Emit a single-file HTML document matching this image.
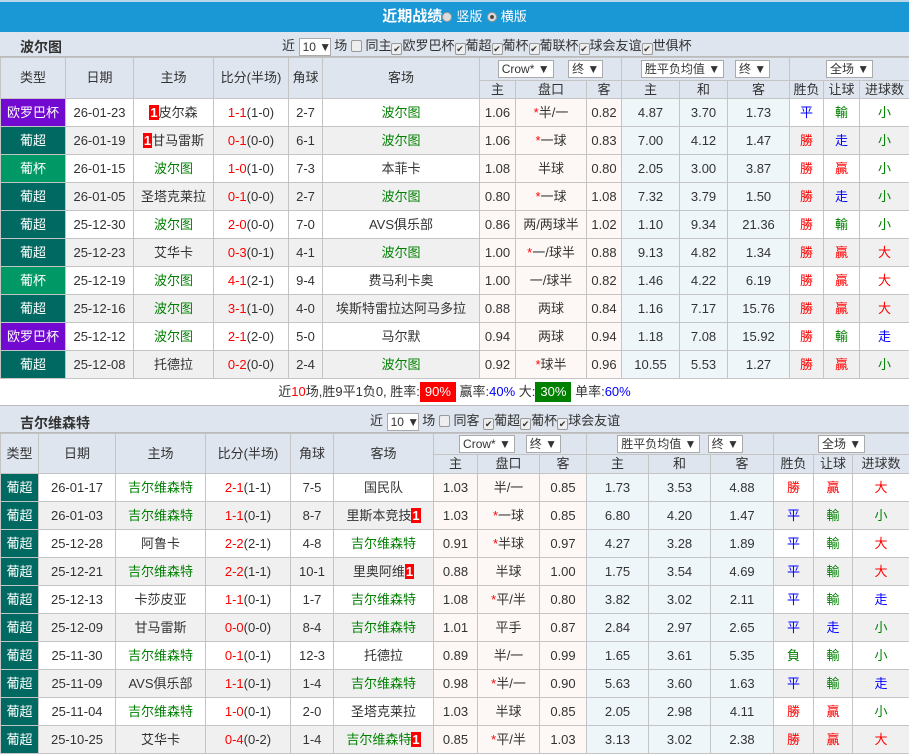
<!DOCTYPE html>
<html><head><meta charset="utf-8"><style>
*{margin:0;padding:0;box-sizing:border-box}
body{width:909px;height:755px;overflow:hidden;background:#fff;font-family:"Liberation Sans","Noto Sans CJK SC",sans-serif;font-size:13px;color:#333}
.top{height:32px;background:#1a98d5;border-top:2px solid #b8d8ea;color:#fff;text-align:center;font-weight:bold;font-size:15px;line-height:30px}
.top span{font-weight:normal;font-size:13px}
.rd{display:inline-block;width:10px;height:10px;border-radius:50%;background:#ddd;border:1px solid #999;vertical-align:-1px}
.rd.on{background:radial-gradient(circle,#444 30%,#ddd 40%)}
.bar{background:#dee5ee;position:relative;border-bottom:1px solid #bbb}
.bar b{position:absolute;left:20px;font-size:14px;color:#333}
.bar .f{position:absolute;font-size:13px;color:#333;white-space:nowrap}
.sel{display:inline-block;background:#fff;border:1px solid #aaa;padding:0 3px;height:18px;line-height:16px;vertical-align:middle;font-size:12px}
.cb{display:inline-block;width:11px;height:12px;border:1px solid #999;border-radius:2px;background:#eee;vertical-align:-2px;font-size:9px;line-height:10px;text-align:center}
table{border-collapse:collapse;table-layout:fixed;width:909px}
td{border:1px solid #c4c4c4;text-align:center;white-space:nowrap;overflow:hidden;padding:0;line-height:16px}
thead td{background:#dee5ee;color:#333}
tbody tr{height:28px}
tbody tr:nth-child(even) td{background:#f0f0f0}
tbody td.o1{background:#fdf8f5!important}
tbody td.o2{background:#eef6fa!important}
td.t1{background:#7109d0!important;color:#fff}
td.t2{background:#006a62!important;color:#fff}
td.t3{background:#009966!important;color:#fff}
.g{color:#008000}.r{color:#f00}.bl{color:#00f}.s{color:#f00}
.n{background:#f00;color:#fff;font-weight:bold;padding:0 1px}
.sum{height:27px;text-align:center;line-height:26px;border-bottom:1px solid #bbb}
.sum .p{display:inline-block;color:#fff;padding:0 5px;line-height:20px}
</style></head><body>
<div class="top">近期战绩<span class="rd"></span> <span>竖版</span> <span class="rd on"></span> <span>横版</span></div>
<div class="bar" style="height:25px"><b style="top:5px">波尔图</b>
<div class="f" style="left:282px;top:3px">近 <span class="sel" style="width:32px">10 ▼</span> 场 <span class="cb"></span> 同主<span class="cb">✔</span>欧罗巴杯<span class="cb">✔</span>葡超<span class="cb">✔</span>葡杯<span class="cb">✔</span>葡联杯<span class="cb">✔</span>球会友谊<span class="cb">✔</span>世俱杯</div></div>
<table>
<colgroup><col style="width:65px"><col style="width:68px"><col style="width:80px"><col style="width:75px"><col style="width:34px"><col style="width:157px"><col style="width:36px"><col style="width:71px"><col style="width:35px"><col style="width:58px"><col style="width:48px"><col style="width:62px"><col style="width:34px"><col style="width:36px"><col style="width:50px"></colgroup>
<thead><tr style="height:23px"><td rowspan="2">类型</td><td rowspan="2">日期</td><td rowspan="2">主场</td><td rowspan="2">比分(半场)</td><td rowspan="2">角球</td><td rowspan="2">客场</td><td colspan="3"><span class="sel">Crow* ▼</span> &nbsp;&nbsp;&nbsp;<span class="sel">终 ▼</span></td><td colspan="3"><span class="sel">胜平负均值 ▼</span> &nbsp;&nbsp;<span class="sel">终 ▼</span></td><td colspan="3"><span class="sel">全场 ▼</span></td></tr>
<tr style="height:18px"><td>主</td><td>盘口</td><td>客</td><td>主</td><td>和</td><td>客</td><td>胜负</td><td>让球</td><td>进球数</td></tr></thead>
<tbody>
<tr><td class="t1">欧罗巴杯</td><td>26-01-23</td><td><span class="n">1</span>皮尔森</td><td><span class="s">1-1</span>(1-0)</td><td>2-7</td><td class="g">波尔图</td><td class="o1">1.06</td><td class="o1"><span class="s">*</span>半/一</td><td class="o1">0.82</td><td class="o2">4.87</td><td class="o2">3.70</td><td class="o2">1.73</td><td class="bl">平</td><td class="g">輸</td><td class="g">小</td></tr>
<tr><td class="t2">葡超</td><td>26-01-19</td><td><span class="n">1</span>甘马雷斯</td><td><span class="s">0-1</span>(0-0)</td><td>6-1</td><td class="g">波尔图</td><td class="o1">1.06</td><td class="o1"><span class="s">*</span>一球</td><td class="o1">0.83</td><td class="o2">7.00</td><td class="o2">4.12</td><td class="o2">1.47</td><td class="r">勝</td><td class="bl">走</td><td class="g">小</td></tr>
<tr><td class="t3">葡杯</td><td>26-01-15</td><td class="g">波尔图</td><td><span class="s">1-0</span>(1-0)</td><td>7-3</td><td>本菲卡</td><td class="o1">1.08</td><td class="o1">半球</td><td class="o1">0.80</td><td class="o2">2.05</td><td class="o2">3.00</td><td class="o2">3.87</td><td class="r">勝</td><td class="r">贏</td><td class="g">小</td></tr>
<tr><td class="t2">葡超</td><td>26-01-05</td><td>圣塔克莱拉</td><td><span class="s">0-1</span>(0-0)</td><td>2-7</td><td class="g">波尔图</td><td class="o1">0.80</td><td class="o1"><span class="s">*</span>一球</td><td class="o1">1.08</td><td class="o2">7.32</td><td class="o2">3.79</td><td class="o2">1.50</td><td class="r">勝</td><td class="bl">走</td><td class="g">小</td></tr>
<tr><td class="t2">葡超</td><td>25-12-30</td><td class="g">波尔图</td><td><span class="s">2-0</span>(0-0)</td><td>7-0</td><td>AVS俱乐部</td><td class="o1">0.86</td><td class="o1">两/两球半</td><td class="o1">1.02</td><td class="o2">1.10</td><td class="o2">9.34</td><td class="o2">21.36</td><td class="r">勝</td><td class="g">輸</td><td class="g">小</td></tr>
<tr><td class="t2">葡超</td><td>25-12-23</td><td>艾华卡</td><td><span class="s">0-3</span>(0-1)</td><td>4-1</td><td class="g">波尔图</td><td class="o1">1.00</td><td class="o1"><span class="s">*</span>一/球半</td><td class="o1">0.88</td><td class="o2">9.13</td><td class="o2">4.82</td><td class="o2">1.34</td><td class="r">勝</td><td class="r">贏</td><td class="r">大</td></tr>
<tr><td class="t3">葡杯</td><td>25-12-19</td><td class="g">波尔图</td><td><span class="s">4-1</span>(2-1)</td><td>9-4</td><td>费马利卡奥</td><td class="o1">1.00</td><td class="o1">一/球半</td><td class="o1">0.82</td><td class="o2">1.46</td><td class="o2">4.22</td><td class="o2">6.19</td><td class="r">勝</td><td class="r">贏</td><td class="r">大</td></tr>
<tr><td class="t2">葡超</td><td>25-12-16</td><td class="g">波尔图</td><td><span class="s">3-1</span>(1-0)</td><td>4-0</td><td>埃斯特雷拉达阿马多拉</td><td class="o1">0.88</td><td class="o1">两球</td><td class="o1">0.84</td><td class="o2">1.16</td><td class="o2">7.17</td><td class="o2">15.76</td><td class="r">勝</td><td class="r">贏</td><td class="r">大</td></tr>
<tr><td class="t1">欧罗巴杯</td><td>25-12-12</td><td class="g">波尔图</td><td><span class="s">2-1</span>(2-0)</td><td>5-0</td><td>马尔默</td><td class="o1">0.94</td><td class="o1">两球</td><td class="o1">0.94</td><td class="o2">1.18</td><td class="o2">7.08</td><td class="o2">15.92</td><td class="r">勝</td><td class="g">輸</td><td class="bl">走</td></tr>
<tr><td class="t2">葡超</td><td>25-12-08</td><td>托德拉</td><td><span class="s">0-2</span>(0-0)</td><td>2-4</td><td class="g">波尔图</td><td class="o1">0.92</td><td class="o1"><span class="s">*</span>球半</td><td class="o1">0.96</td><td class="o2">10.55</td><td class="o2">5.53</td><td class="o2">1.27</td><td class="r">勝</td><td class="r">贏</td><td class="g">小</td></tr>
</tbody></table>
<div class="sum">近<span class="r">10</span>场,胜9平1负0, 胜率:<span class="p" style="background:#f00">90%</span> 赢率:<span class="bl">40%</span> 大:<span class="p" style="background:#008000">30%</span> 单率:<span class="bl">60%</span></div>
<div class="bar" style="height:27px"><b style="top:7px">吉尔维森特</b>
<div class="f" style="left:370px;top:4px">近 <span class="sel" style="width:32px">10 ▼</span> 场 <span class="cb"></span> 同客 <span class="cb">✔</span>葡超<span class="cb">✔</span>葡杯<span class="cb">✔</span>球会友谊</div></div>
<table>
<colgroup><col style="width:38px"><col style="width:77px"><col style="width:90px"><col style="width:85px"><col style="width:43px"><col style="width:100px"><col style="width:44px"><col style="width:62px"><col style="width:47px"><col style="width:62px"><col style="width:62px"><col style="width:63px"><col style="width:40px"><col style="width:39px"><col style="width:57px"></colgroup>
<thead><tr style="height:21px"><td rowspan="2">类型</td><td rowspan="2">日期</td><td rowspan="2">主场</td><td rowspan="2">比分(半场)</td><td rowspan="2">角球</td><td rowspan="2">客场</td><td colspan="3"><span class="sel">Crow* ▼</span> &nbsp;&nbsp;<span class="sel">终 ▼</span></td><td colspan="3"><span class="sel">胜平负均值 ▼</span> &nbsp;<span class="sel">终 ▼</span></td><td colspan="3"><span class="sel">全场 ▼</span></td></tr>
<tr style="height:19px"><td>主</td><td>盘口</td><td>客</td><td>主</td><td>和</td><td>客</td><td>胜负</td><td>让球</td><td>进球数</td></tr></thead>
<tbody>
<tr><td class="t2">葡超</td><td>26-01-17</td><td class="g">吉尔维森特</td><td><span class="s">2-1</span>(1-1)</td><td>7-5</td><td>国民队</td><td class="o1">1.03</td><td class="o1">半/一</td><td class="o1">0.85</td><td class="o2">1.73</td><td class="o2">3.53</td><td class="o2">4.88</td><td class="r">勝</td><td class="r">贏</td><td class="r">大</td></tr>
<tr><td class="t2">葡超</td><td>26-01-03</td><td class="g">吉尔维森特</td><td><span class="s">1-1</span>(0-1)</td><td>8-7</td><td>里斯本竞技<span class="n">1</span></td><td class="o1">1.03</td><td class="o1"><span class="s">*</span>一球</td><td class="o1">0.85</td><td class="o2">6.80</td><td class="o2">4.20</td><td class="o2">1.47</td><td class="bl">平</td><td class="g">輸</td><td class="g">小</td></tr>
<tr><td class="t2">葡超</td><td>25-12-28</td><td>阿鲁卡</td><td><span class="s">2-2</span>(2-1)</td><td>4-8</td><td class="g">吉尔维森特</td><td class="o1">0.91</td><td class="o1"><span class="s">*</span>半球</td><td class="o1">0.97</td><td class="o2">4.27</td><td class="o2">3.28</td><td class="o2">1.89</td><td class="bl">平</td><td class="g">輸</td><td class="r">大</td></tr>
<tr><td class="t2">葡超</td><td>25-12-21</td><td class="g">吉尔维森特</td><td><span class="s">2-2</span>(1-1)</td><td>10-1</td><td>里奥阿维<span class="n">1</span></td><td class="o1">0.88</td><td class="o1">半球</td><td class="o1">1.00</td><td class="o2">1.75</td><td class="o2">3.54</td><td class="o2">4.69</td><td class="bl">平</td><td class="g">輸</td><td class="r">大</td></tr>
<tr><td class="t2">葡超</td><td>25-12-13</td><td>卡莎皮亚</td><td><span class="s">1-1</span>(0-1)</td><td>1-7</td><td class="g">吉尔维森特</td><td class="o1">1.08</td><td class="o1"><span class="s">*</span>平/半</td><td class="o1">0.80</td><td class="o2">3.82</td><td class="o2">3.02</td><td class="o2">2.11</td><td class="bl">平</td><td class="g">輸</td><td class="bl">走</td></tr>
<tr><td class="t2">葡超</td><td>25-12-09</td><td>甘马雷斯</td><td><span class="s">0-0</span>(0-0)</td><td>8-4</td><td class="g">吉尔维森特</td><td class="o1">1.01</td><td class="o1">平手</td><td class="o1">0.87</td><td class="o2">2.84</td><td class="o2">2.97</td><td class="o2">2.65</td><td class="bl">平</td><td class="bl">走</td><td class="g">小</td></tr>
<tr><td class="t2">葡超</td><td>25-11-30</td><td class="g">吉尔维森特</td><td><span class="s">0-1</span>(0-1)</td><td>12-3</td><td>托德拉</td><td class="o1">0.89</td><td class="o1">半/一</td><td class="o1">0.99</td><td class="o2">1.65</td><td class="o2">3.61</td><td class="o2">5.35</td><td class="g">負</td><td class="g">輸</td><td class="g">小</td></tr>
<tr><td class="t2">葡超</td><td>25-11-09</td><td>AVS俱乐部</td><td><span class="s">1-1</span>(0-1)</td><td>1-4</td><td class="g">吉尔维森特</td><td class="o1">0.98</td><td class="o1"><span class="s">*</span>半/一</td><td class="o1">0.90</td><td class="o2">5.63</td><td class="o2">3.60</td><td class="o2">1.63</td><td class="bl">平</td><td class="g">輸</td><td class="bl">走</td></tr>
<tr><td class="t2">葡超</td><td>25-11-04</td><td class="g">吉尔维森特</td><td><span class="s">1-0</span>(0-1)</td><td>2-0</td><td>圣塔克莱拉</td><td class="o1">1.03</td><td class="o1">半球</td><td class="o1">0.85</td><td class="o2">2.05</td><td class="o2">2.98</td><td class="o2">4.11</td><td class="r">勝</td><td class="r">贏</td><td class="g">小</td></tr>
<tr><td class="t2">葡超</td><td>25-10-25</td><td>艾华卡</td><td><span class="s">0-4</span>(0-2)</td><td>1-4</td><td class="g">吉尔维森特<span class="n">1</span></td><td class="o1">0.85</td><td class="o1"><span class="s">*</span>平/半</td><td class="o1">1.03</td><td class="o2">3.13</td><td class="o2">3.02</td><td class="o2">2.38</td><td class="r">勝</td><td class="r">贏</td><td class="r">大</td></tr>
</tbody></table>
</body></html>
